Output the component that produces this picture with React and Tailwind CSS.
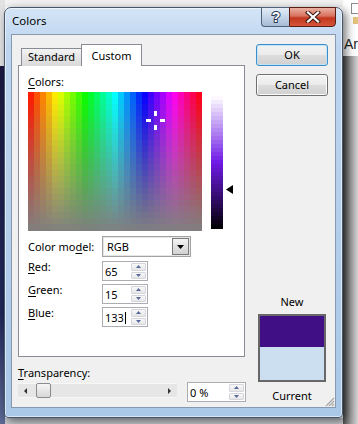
import React from 'react';

// spectrum blocks: hue across, saturation down, lum 50%
const spectrum = [];
for (let r = 0; r < 24; r++) {
  for (let c = 0; c < 29; c++) {
    const h = ((c * 6 + 3) / 174) * 360;
    const s = Math.max(0, 1 - (r * 6 + 3) / 139) * 100;
    spectrum.push(
      <rect key={`${r}-${c}`} x={c * 6} y={r * 6} width="6" height="6" fill={`hsl(${h.toFixed(1)},${s.toFixed(1)}%,50%)`} />
    );
  }
}

// luminance bar for the picked hue/sat
const lum = [];
for (let i = 0; i < 34; i++) {
  const l = Math.max(0, 1 - (i * 4 + 2) / 133) * 100;
  lum.push(<rect key={i} x="0" y={i * 4} width="12" height="4" fill={`hsl(265,80%,${l.toFixed(1)}%)`} />);
}

function Tri({ up }) {
  return (
    <svg width="5" height="3" viewBox="0 0 5 3">
      <polygon points={up ? '2.5,0 5,3 0,3' : '0,0 5,0 2.5,3'} fill="#56699a" />
    </svg>
  );
}

function Spin({ value, className, caret }) {
  return (
    <div className={`flex h-[20px] border border-[#abadb3] bg-white ${className}`}>
      <div className="flex flex-1 items-center pl-[2px] pt-px">
        {value}
        {caret && <span className="ml-px inline-block h-[12px] w-px bg-black" />}
      </div>
      <div className="my-px mr-px flex w-[15px] flex-col gap-px">
        <div className="flex flex-1 items-center justify-center rounded-[1px] border border-[#d4d6dc] bg-[linear-gradient(to_bottom,#f8f8f8,#e6e6e6)]">
          <Tri up />
        </div>
        <div className="flex flex-1 items-center justify-center rounded-[1px] border border-[#d4d6dc] bg-[linear-gradient(to_bottom,#f8f8f8,#e6e6e6)]">
          <Tri />
        </div>
      </div>
    </div>
  );
}

function Label({ text, u, rest, pre }) {
  return (
    <div className="w-[74px] shrink-0">
      {pre}
      <span className="underline underline-offset-2">{u}</span>
      {rest}
    </div>
  );
}

export default function App() {
  return (
    <div className="relative h-[424px] w-[358px] overflow-hidden bg-white font-['Noto_Sans',sans-serif] text-[11px] leading-[16px] text-black">
      {/* desktop behind the dialog */}
      <div className="flex h-full">
        <div className="flex w-[5px] flex-col">
          <div className="h-[66px] bg-[#e2e2e2]" />
          <div className="flex-1 bg-[linear-gradient(to_bottom,#1b1943,#22295a_70%,#5d6b95)]" />
        </div>
        <div className="flex flex-1 flex-col">
          <div className="h-[7px] bg-[#f2f2f2]" />
          <div className="flex-1 bg-white" />
          <div className="h-[6px] bg-[#c9ccd1]" />
        </div>
        <div className="flex w-[15px] flex-col">
          <div className="flex h-[56px] flex-col bg-white">
            <div className="ml-[8px] mt-[3px] h-[11px] w-[7px] border border-r-0 border-[#8d8d8d]" />
            <div className="ml-[10px] mt-[3px] h-[7px] bg-[#e3c27c]" />
            <div className="ml-[1px] mt-[12px] whitespace-nowrap font-['Liberation_Sans',sans-serif] text-[14px] leading-[16px] text-[#222]">Arr</div>
          </div>
          <div className="flex-1 bg-[linear-gradient(to_right,#4f4f4f,#9a9a9a_50%,#d4d4d4)]" />
        </div>
      </div>

      {/* dialog window */}
      <div className="absolute left-[4px] top-[7px] flex h-[411px] w-[339px] flex-col rounded-t-[7px] rounded-b-[4px] border border-[#46566b] bg-[linear-gradient(to_bottom,#d3e4f6,#bdd5ef_40px,#a9c7e7)] shadow-[inset_0_0_0_1px_rgba(255,255,255,0.55),3px_3px_10px_rgba(0,0,0,0.55)]">
        {/* title bar */}
        <div className="flex h-[26px] shrink-0 items-start justify-between">
          <div className="ml-[7px] mt-[5px] text-[11.5px] text-black">Colors</div>
          <div className="-mt-px mr-[6px] flex h-[20px]">
            <div className="flex w-[28px] items-center justify-center rounded-bl-[4px] border border-r-0 border-[#4f6079] bg-[linear-gradient(to_bottom,#e3ecf6,#c5d5e8_50%,#a6bbd5)]">
              <svg width="12" height="16" viewBox="0 0 12 16">
                <text x="6" y="13" textAnchor="middle" fontFamily="Liberation Sans, sans-serif" fontWeight="bold" fontSize="14" fill="#fff" stroke="#2c3b55" strokeWidth="2" paintOrder="stroke">?</text>
              </svg>
            </div>
            <div className="flex w-[47px] items-center justify-center rounded-br-[4px] border border-[#5a1d14] bg-[linear-gradient(to_bottom,#eab1a4,#d9705c_45%,#c2371f_55%,#d5553b)]">
              <svg width="16" height="12" viewBox="0 0 16 12">
                <path d="M3 1.5 L13 10.5 M13 1.5 L3 10.5" stroke="#3b1b16" strokeWidth="4.2" strokeLinecap="square" />
                <path d="M3 1.5 L13 10.5 M13 1.5 L3 10.5" stroke="#fff" strokeWidth="2.2" strokeLinecap="square" />
              </svg>
            </div>
          </div>
        </div>

        {/* client area */}
        <div className="relative mx-[6px] mb-[9px] flex flex-1 border border-[#8799b0] bg-[#f0f0f0]">
          {/* left column */}
          <div className="flex w-[234px] flex-col pl-[6px] pt-[9px]">
            {/* tabs */}
            <div className="relative z-10 flex h-[22px] items-end pl-[3px]">
              <div className="h-[18px] w-[61px] border border-b-0 border-[#898c95] bg-[linear-gradient(to_bottom,#f3f3f3,#e5e5e5_50%,#d9d9d9)] text-center">
                Standard
              </div>
              <div className="-ml-px h-[22px] w-[61px] border border-b-0 border-[#898c95] bg-white pt-[3px] text-center">
                Custom
              </div>
            </div>
            {/* tab panel */}
            <div className="-mt-px flex h-[292px] w-[227px] flex-col border border-[#898c95] bg-white pl-[9px] pt-[8px]">
              <div>
                <span className="underline underline-offset-2">C</span>olors:
              </div>
              <div className="mt-[2px] flex items-start">
                <svg width="174" height="139" viewBox="0 0 174 139" shapeRendering="crispEdges">
                  {spectrum}
                  <rect x="126" y="19" width="3" height="5" fill="#fff" />
                  <rect x="126" y="33" width="3" height="5" fill="#fff" />
                  <rect x="118" y="27" width="5" height="3" fill="#fff" />
                  <rect x="132" y="27" width="5" height="3" fill="#fff" />
                </svg>
                <svg className="ml-[9px] mt-[4px]" width="12" height="133" viewBox="0 0 12 133" shapeRendering="crispEdges">
                  {lum}
                </svg>
                <svg className="ml-[3px] mt-[93px]" width="7" height="9" viewBox="0 0 7 9">
                  <polygon points="0,4.5 7,0 7,9" fill="#000" />
                </svg>
              </div>

              <div className="mt-[5px] flex items-center">
                <div className="w-[74px] shrink-0">
                  Color mo<span className="underline underline-offset-2">d</span>el:
                </div>
                <div className="flex h-[21px] w-[89px] border border-[#a3a3a3] bg-white shadow-[inset_0_0_0_1px_#e6e6e6]">
                  <div className="flex flex-1 items-center pl-[4px]">RGB</div>
                  <div className="m-px flex w-[17px] items-center justify-center border border-[#7a7a7a] bg-[linear-gradient(to_bottom,#f4f4f4,#e2e2e2_50%,#d2d2d2)]">
                    <svg width="7" height="4" viewBox="0 0 7 4">
                      <polygon points="0,0 7,0 3.5,4" fill="#000" />
                    </svg>
                  </div>
                </div>
              </div>

              <div className="mt-[2px] flex items-start">
                <Label u="R" rest="ed:" />
                <Spin value="65" className="mt-[2px] w-[46px]" />
              </div>
              <div className="mt-px flex items-start">
                <Label u="G" rest="reen:" />
                <Spin value="15" className="mt-[2px] w-[46px]" />
              </div>
              <div className="mt-px flex items-start">
                <Label u="B" rest="lue:" />
                <Spin value="133" caret className="mt-[2px] w-[46px]" />
              </div>
            </div>

            {/* transparency */}
            <div className="mt-[8px]">
              <span className="underline underline-offset-2">T</span>ransparency:
            </div>
            <div className="mt-px flex items-start">
              <div className="mt-px flex h-[15px] w-[159px] items-center border-y border-[#f7f7f7] bg-[#e6e6e6]">
                <svg className="ml-[6px]" width="3" height="6" viewBox="0 0 3 6">
                  <polygon points="0,3 3,0 3,6" fill="#333" />
                </svg>
                <div className="ml-[9px] h-[15px] w-[15px] rounded-[2px] border border-[#8b8b8b] bg-[linear-gradient(to_bottom,#f7f7f7,#e6e6e6_50%,#d6d6d6)]" />
                <svg className="ml-auto mr-[6px]" width="3" height="6" viewBox="0 0 3 6">
                  <polygon points="0,0 3,3 0,6" fill="#333" />
                </svg>
              </div>
              <Spin value="0 %" className="ml-[10px] h-[19px] w-[59px]" />
            </div>
          </div>

          {/* right column */}
          <div className="ml-[10px] flex w-[72px] flex-col pb-[3px] pt-[9px]">
            <div className="flex h-[22px] items-center justify-center rounded-[3px] border border-[#3c8fc8] bg-[linear-gradient(to_bottom,#f3f3f3,#ebebeb_50%,#dddddd_50%,#d0d0d0)] shadow-[inset_0_0_0_1px_#bfe3f8]">
              OK
            </div>
            <div className="mt-[8px] flex h-[22px] items-center justify-center rounded-[3px] border border-[#707070] bg-[linear-gradient(to_bottom,#f3f3f3,#ebebeb_50%,#dddddd_50%,#d0d0d0)] shadow-[inset_0_0_0_1px_#fcfcfc]">
              Cancel
            </div>
            <div className="mt-auto flex flex-col items-center">
              <div>New</div>
              <div className="mt-[4px] flex h-[68px] w-[68px] flex-col border-2 border-[#686868]">
                <div className="h-[31px] bg-[#410f85]" />
                <div className="flex-1 bg-[#cbdff1]" />
              </div>
              <div className="mt-[6px]">Current</div>
            </div>
          </div>

          {/* size grip */}
          <svg className="absolute bottom-0 right-0" width="11" height="11" viewBox="0 0 11 11">
            <path d="M10 2 L2 10 M10 5 L5 10 M10 8 L8 10" stroke="#a8a8a8" strokeWidth="1.2" />
          </svg>
        </div>
      </div>
    </div>
  );
}
